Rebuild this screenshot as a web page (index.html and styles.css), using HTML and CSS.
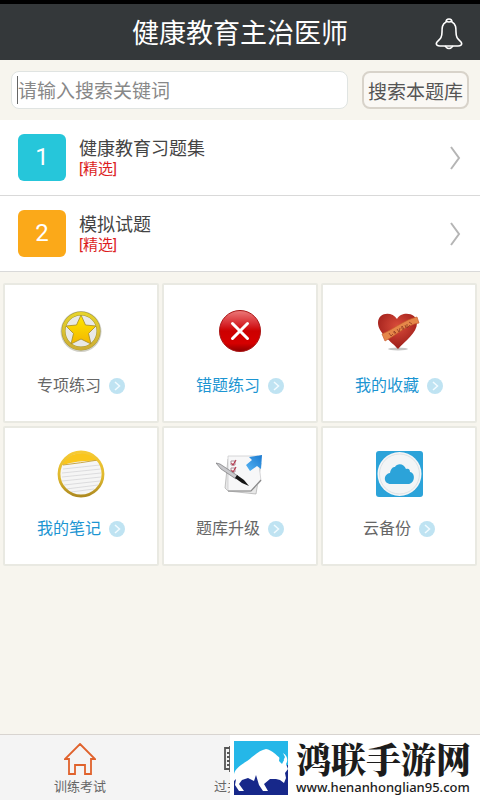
FILE: index.html
```html
<!DOCTYPE html>
<html lang="zh-CN">
<head>
    <meta charset="UTF-8">
    <meta name="viewport" content="width=device-width, initial-scale=1.0">
    <title>健康教育主治医师</title>
    <link rel="stylesheet" href="styles.css">
</head>
<body>
    <header class="header">
        <h1>健康教育主治医师</h1>
        <button class="bell" type="button" aria-label="通知">
            <svg width="28" height="32" viewBox="0 0 28 32" fill="none" stroke="#fff" stroke-width="1.6">
                <path d="M11 4C11 0 17 0 17 4C21 6 21 10 21 14C21 20 23 21 26 24C28 27 25 28 23 28H5C3 28 0 27 2 24C5 21 7 20 7 14C7 10 7 6 11 4Z"/>
                <path d="M11 3Q14 5 17 3M10 28Q14 33 18 28"/>
            </svg>
        </button>
    </header>

    <form class="search">
        <div class="search-box">
            <input type="text" aria-label="搜索关键词" placeholder="请输入搜索关键词">
        </div>
        <button class="search-btn" type="button">搜索本题库</button>
    </form>

    <nav class="list">
        <a class="row" href="#exercises">
            <span class="num cyan">1</span>
            <span class="info"><span class="name">健康教育习题集</span><span class="tag">[精选]</span></span>
            <svg width="12" height="24" viewBox="0 0 12 24" fill="none" stroke="#b5b5b5" stroke-width="2"><path d="M2 1L10 12L2 23"/></svg>
        </a>
        <a class="row" href="#mock">
            <span class="num orange">2</span>
            <span class="info"><span class="name">模拟试题</span><span class="tag">[精选]</span></span>
            <svg width="12" height="24" viewBox="0 0 12 24" fill="none" stroke="#b5b5b5" stroke-width="2"><path d="M2 1L10 12L2 23"/></svg>
        </a>
    </nav>

    <!-- shared arrow and gradients -->
    <svg class="defs" width="0" height="0" aria-hidden="true">
        <defs>
            <symbol id="go" viewBox="0 0 16 16">
                <circle cx="8" cy="8" r="8" fill="#bfe3f2"/>
                <path d="M6 4L10.500 8L6 12" fill="none" stroke="#f2fbff" stroke-width="1.500"/>
            </symbol>
            <linearGradient id="gold" x1="0" y1="0" x2="0" y2="1">
                <stop offset="0" stop-color="#e6d32c"/><stop offset="1" stop-color="#cfae35"/>
            </linearGradient>
            <linearGradient id="star" x1="0" y1="0" x2="0" y2="1">
                <stop offset="0" stop-color="#ffe800"/><stop offset="1" stop-color="#f3b600"/>
            </linearGradient>
            <linearGradient id="red" x1="0" y1="0" x2="0" y2="1">
                <stop offset="0" stop-color="#ec7a7a"/><stop offset=".35" stop-color="#d62429"/><stop offset=".5" stop-color="#cc0000"/><stop offset=".8" stop-color="#d60000"/><stop offset="1" stop-color="#8e0000"/>
            </linearGradient>
            <radialGradient id="heart" cx=".5" cy=".35" r=".6">
                <stop offset="0" stop-color="#d94c3b"/><stop offset="1" stop-color="#a01f1b"/>
            </radialGradient>
            <linearGradient id="ring" x1="0" y1="0" x2="0" y2="1">
                <stop offset="0" stop-color="#f6ca35"/><stop offset=".6" stop-color="#dcb62d"/><stop offset="1" stop-color="#ae8a20"/>
            </linearGradient>
            <linearGradient id="blue" x1="0" y1="1" x2="1" y2="0">
                <stop offset="0" stop-color="#58b5f4"/><stop offset="1" stop-color="#1878cf"/>
            </linearGradient>
        </defs>
    </svg>

    <main class="grid">
        <a class="cell" href="#special">
            <svg class="icon" viewBox="0 0 48 48">
                <circle cx="24" cy="24.500" r="20.500" fill="#d0cfc6"/>
                <circle cx="24" cy="24" r="17.500" fill="#e9e9e6" stroke="#a3962f" stroke-width="4"/>
                <circle cx="24" cy="24" r="17.500" fill="none" stroke="url(#gold)" stroke-width="3"/>
                <path d="M24 8L28.500 18L39 19L31.500 26.500L34 37L24 32L14 37L16.500 26.500L9 19L19.500 18Z" fill="url(#star)" stroke="#a38a2b" stroke-width=".8"/>
            </svg>
            <span class="label">专项练习<svg class="go"><use href="#go"/></svg></span>
        </a>
        <a class="cell" href="#wrong">
            <svg class="icon" viewBox="0 0 48 48">
                <circle cx="24" cy="24" r="20.500" fill="url(#red)" stroke="#aa1616" stroke-width="1"/>
                <path d="M16.500 16.500L31.500 31.500M31.500 16.500L16.500 31.500" stroke="#fff" stroke-width="3" stroke-linecap="round"/>
            </svg>
            <span class="label blue">错题练习<svg class="go"><use href="#go"/></svg></span>
        </a>
        <a class="cell" href="#favorites">
            <svg class="icon" viewBox="0 0 48 48">
                <ellipse cx="23" cy="42" rx="10" ry="1.500" fill="#c5c5c5"/>
                <path d="M23 42C17 35 3 26 3 16C3 5 17 4 22 12C26 4 42 5 42 16C42 26 30 34 23 42Z" fill="url(#heart)"/>
                <path d="M7 27C19 22 29 13 42 10L44 16C31 18 23 27 10 34Z" fill="#e58749" stroke="#c95d2e" stroke-width=".7"/>
                <path d="M14 26L16 29L18 27M19 24Q18 27 21 26ZM22 22L24 25L25 21M27 19Q26 23 29 22ZM30 18L31 21M32 17V21L35 18M34 15L37 17" fill="none" stroke="#923a25" stroke-width=".8"/>
            </svg>
            <span class="label blue">我的收藏<svg class="go"><use href="#go"/></svg></span>
        </a>
        <a class="cell" href="#notes">
            <svg class="icon" viewBox="0 0 48 48">
                <circle cx="24" cy="24" r="22" fill="#f5f5f5"/>
                <path d="M4 15C8 3 33 -3 41 11Q23 10 6 15Z" fill="#fac61c"/>
                <path d="M6 15Q23 13 41 10" fill="none" stroke="#c9a744"/>
                <path d="M6 19L43 15M5 23L44 19M5 27L44 23M5 31L44 27M7 35L43 31M9 39L41 35M14 42L37 39" fill="none" stroke="#d5d5d8" stroke-width=".8"/>
                <circle cx="24" cy="24" r="22" fill="none" stroke="url(#ring)" stroke-width="2.800"/>
            </svg>
            <span class="label blue">我的笔记<svg class="go"><use href="#go"/></svg></span>
        </a>
        <a class="cell" href="#upgrade">
            <svg class="icon" viewBox="0 0 48 48">
                <path d="M12 9L9 38L12 41L40 44L45 13L38 7Z" fill="#e8e8e8" stroke="#aaa" stroke-width=".7"/>
                <path d="M12 6H42L45 31Q40 37 35 41H12Z" fill="#f7f7f8" stroke="#c6c6c8" stroke-width=".7"/>
                <path d="M12 41H35L45 30" fill="none" stroke="#888" stroke-width="1.200"/>
                <path d="M15 11H19V15H15ZM15 18H19V22H15Z" fill="#fff" stroke="#ad8d98"/>
                <path d="M15.500 13L17 15L20 10M15.500 20L17 22L20 17" fill="none" stroke="#b5394e" stroke-width="1.200"/>
                <path d="M0 13L4 14L22 26L20 29L5 19Z" fill="#c9c9cc" stroke="#77777a" stroke-width=".7"/>
                <path d="M19 28L21 25L28 30L33 36L26 33Z" fill="#151515"/>
                <path d="M30 15L36 10L33 7L46 5L45 19L41 16L34 21Z" fill="url(#blue)"/>
            </svg>
            <span class="label">题库升级<svg class="go"><use href="#go"/></svg></span>
        </a>
        <a class="cell" href="#backup">
            <svg class="icon" viewBox="0 0 48 48">
                <rect x="1" y="1" width="47" height="46" rx="3" fill="#2ca3d9"/>
                <circle cx="24.500" cy="24" r="22" fill="#f3f5f6"/>
                <circle cx="24.500" cy="24" r="20" fill="none" stroke="#d7dce0" stroke-width=".8"/>
                <path d="M16 34C8 34 8 24 15 23C16 18 18 17 20 17C22 13 29 13 31 19C34 18 35 20 35 22C41 23 40 34 33 34Z" fill="#2ca3d9"/>
            </svg>
            <span class="label">云备份<svg class="go"><use href="#go"/></svg></span>
        </a>
    </main>

    <footer class="tabs">
        <a class="tab" href="#train">
            <svg width="32" height="32" viewBox="0 0 32 32" fill="none" stroke="#e0622c" stroke-width="1.800">
                <path d="M16 1L31 16H27V31H21V22H11V31H5V16H1Z"/>
            </svg>
            <span>训练考试</span>
        </a>
        <a class="tab" href="#pass">
            <svg width="32" height="32" viewBox="0 0 32 32" fill="none" stroke="#555" stroke-width="1.800">
                <path d="M6 5H1V26H6M6 4V28H30V4ZM3 10H8M3 14H8M3 18H8M3 22H8"/>
            </svg>
            <span class="tab-text">过关</span>
        </a>
        <span class="tab"></span>
        <a class="brand" href="#site">
            <svg class="brand-logo" viewBox="0 0 54 54">
                <path d="M0 0H54V54H0Z" fill="#25b7e8"/>
                <path d="M0 37L30 30L54 24V54H0Z" fill="#17288a"/>
                <path d="M0 33C2 25 12 22 18 16C23 12 27 9 32 8C38 9 42 14 46 17L49 20L51 16L49 12C54 15 54 20 52 23L54 28L51 32L52 37L50 42L46 39L42 38L36 38L30 43L34 50H29L25 44L22 34L20 40L14 37L8 39L5 43L10 50H5L1 44L2 38L0 40Z" fill="#fff"/>
                <path d="M46 12L48 11L47 16L50 19L48 23L45 20Z" fill="#25b7e8"/>
            </svg>
            <span class="brand-text">
                <strong>鸿联手游网</strong>
                <small>www.henanhonglian95.com</small>
            </span>
        </a>
    </footer>
</body>
</html>
```

FILE: styles.css
```css
* {
    box-sizing: border-box;
}
body {
    display: flex;
    flex-direction: column;
    min-height: 100vh;
    margin: 0;
    background-color: #f7f5ee;
    color: #444;
    font-family: Roboto, "Noto Sans CJK SC", sans-serif;
}
a {
    color: inherit;
    text-decoration: none;
}
button {
    font-family: inherit;
    cursor: pointer;
}
.header {
    position: relative;
    display: flex;
    align-items: center;
    justify-content: center;
    height: 60px;
    padding-top: 4px;
    border-top: 4px solid #000;
    background-color: #34383a;
    color: #fff;
}
.header h1 {
    margin: 0;
    font-size: 27px;
    font-weight: 400;
    line-height: 40px;
}
.bell {
    position: absolute;
    right: 17px;
    top: 14px;
    height: 32px;
    padding: 0;
    border: none;
    background: none;
}
.search {
    display: flex;
    gap: 14px;
    padding: 11px;
}
.search-box {
    display: flex;
    flex: 1;
    align-items: center;
    min-width: 0;
    height: 38px;
    padding: 0 5px;
    border: 1px solid #e0e4e2;
    border-radius: 8px;
    background-color: #fff;
}
.search-box input {
    width: 100%;
    height: 28px;
    padding: 2px 0 0;
    border: none;
    border-left: 1px solid #666;
    outline: none;
    background: none;
    font-family: inherit;
    font-size: 19px;
}
.search-box input::placeholder {
    color: #888;
}
.search-btn {
    height: 38px;
    padding: 0 4px;
    border: 2px solid #d8d3ca;
    border-radius: 8px;
    background-color: #faf8f4;
    color: #555;
    font-size: 19px;
}
.list {
    background-color: #fff;
}
.row {
    display: flex;
    align-items: center;
    gap: 13px;
    height: 76px;
    padding: 0 19px 0 18px;
    border-bottom: 1px solid #d9d9d9;
}
.num {
    width: 48px;
    border-radius: 6px;
    color: #fff;
    font-size: 24px;
    line-height: 47px;
    text-align: center;
}
.cyan {
    background-color: #26c6da;
}
.orange {
    background-color: #fba919;
}
.info {
    display: flex;
    flex: 1;
    flex-direction: column;
}
.name {
    font-size: 18px;
    line-height: 22px;
}
.tag {
    color: #dc1e1e;
    font-size: 15px;
    line-height: 18px;
}
.defs {
    position: absolute;
}
.grid {
    display: grid;
    grid-template-columns: repeat(3, 1fr);
    gap: 3px;
    padding: 11px 3px;
}
.cell {
    display: flex;
    flex-direction: column;
    align-items: center;
    gap: 19px;
    height: 140px;
    padding-top: 22px;
    border: 2px solid #e9e9e2;
    border-radius: 2px;
    background-color: #fff;
}
.icon {
    width: 48px;
    height: 48px;
}
.label {
    display: flex;
    align-items: center;
    gap: 8px;
    color: #666;
    font-size: 16px;
    line-height: 24px;
}
.label.blue {
    color: #1c95d2;
}
.go {
    width: 16px;
    height: 16px;
}
.tabs {
    position: relative;
    display: flex;
    height: 66px;
    margin-top: auto;
    border-top: 1px solid #d8d4d0;
    background-color: #f4f4f4;
}
.tab {
    display: flex;
    flex: 1;
    flex-direction: column;
    align-items: center;
    padding-top: 8px;
    color: #666;
    font-size: 13px;
    line-height: 24px;
}
.tab-text {
    width: 52px;
}
.brand {
    position: absolute;
    top: 0;
    right: 0;
    bottom: 0;
    display: flex;
    align-items: center;
    gap: 8px;
    width: 250px;
    padding-left: 4px;
    background-color: #fff;
    color: #1c1c1c;
}
.brand-logo {
    flex: none;
    width: 54px;
    height: 54px;
}
.brand-text {
    display: flex;
    flex-direction: column;
}
.brand strong {
    font-family: "Noto Serif CJK SC", "Noto Sans CJK SC", serif;
    font-size: 35px;
    font-weight: 900;
    line-height: 38px;
}
.brand small {
    font-family: "Noto Sans", sans-serif;
    font-size: 13px;
    font-weight: 500;
    line-height: 20px;
}
```
